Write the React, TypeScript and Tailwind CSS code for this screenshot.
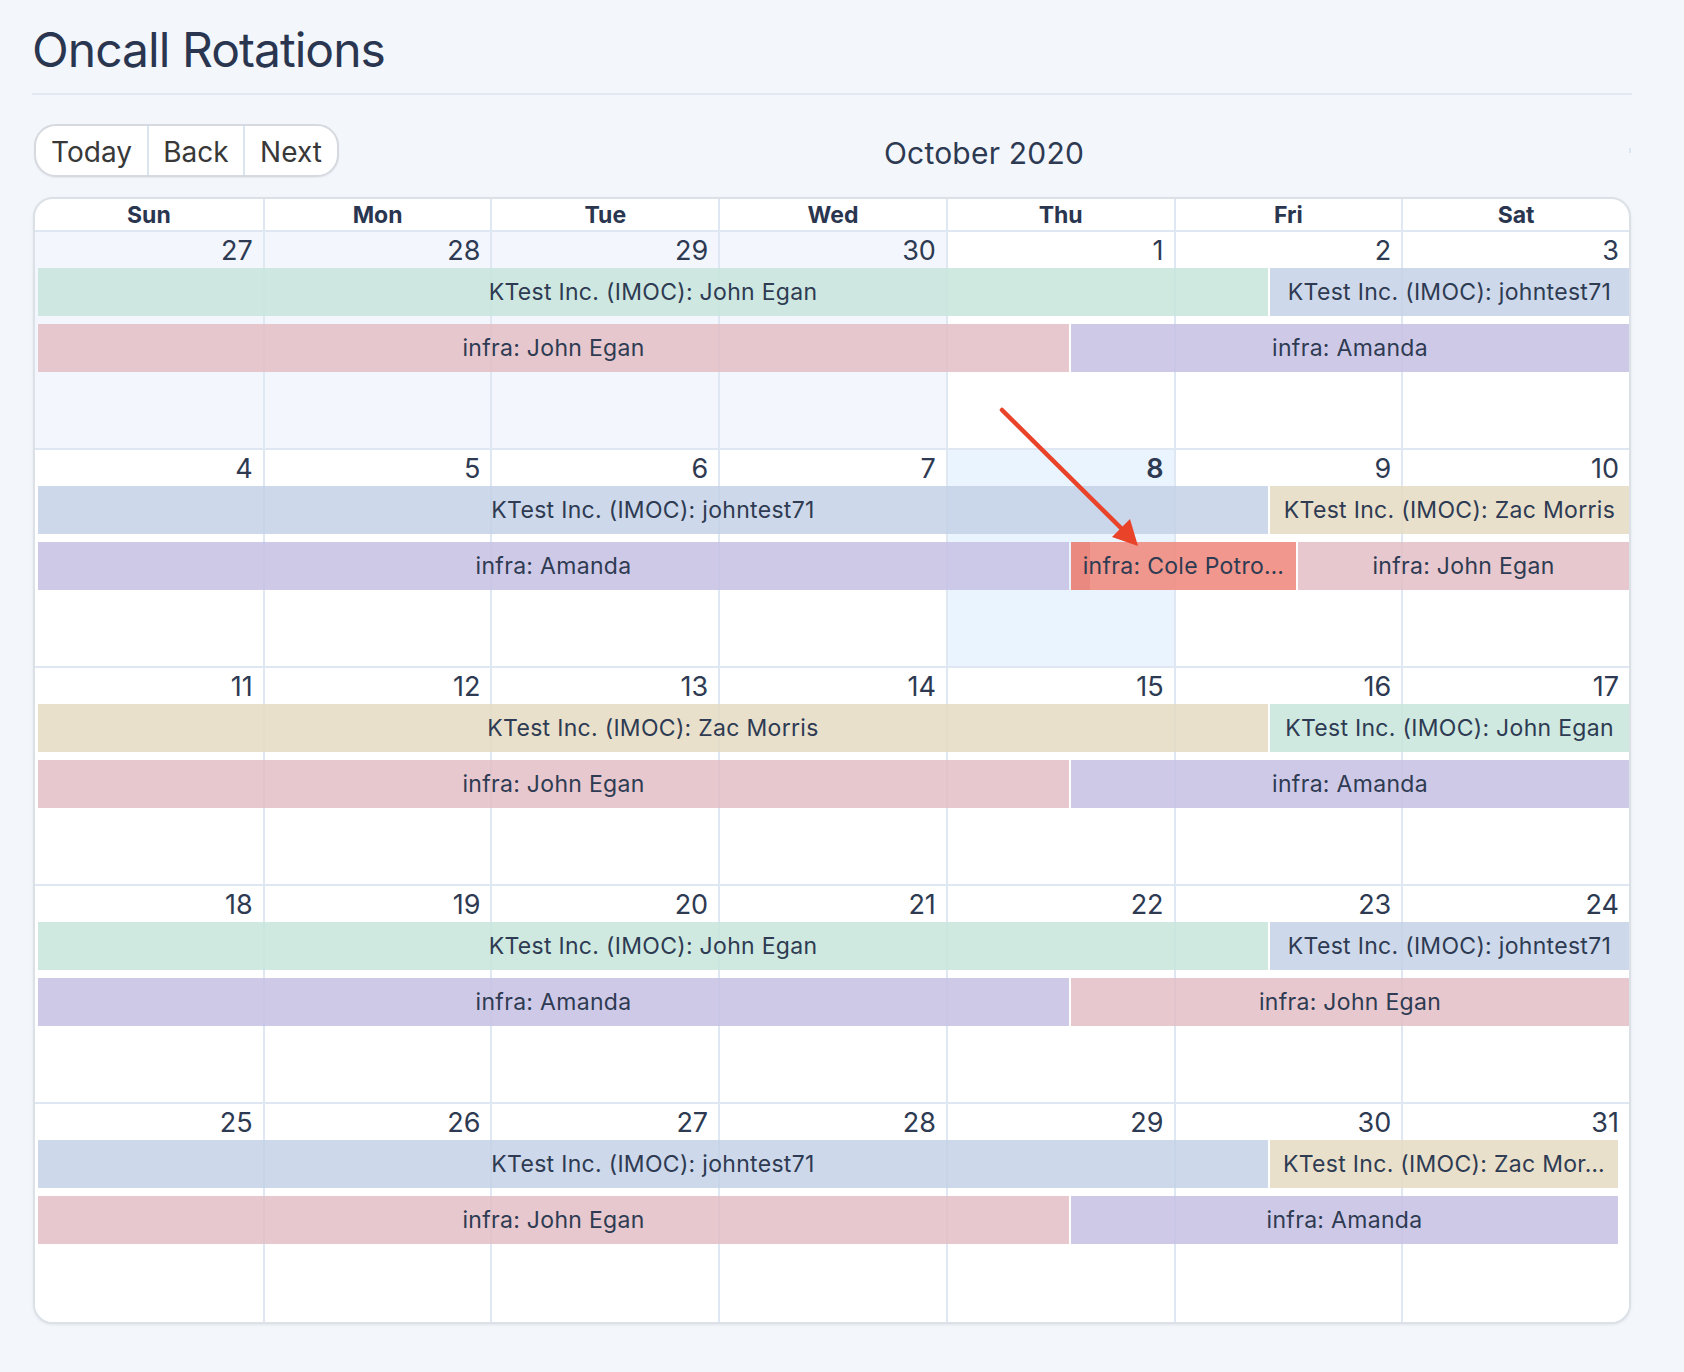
import React from 'react';

type Ev = { label: string; color: string; width?: number; strip?: boolean };
type Week = { days: number[]; off?: number[]; today?: number; lanes: Ev[][]; short?: boolean };

const GREEN = 'bg-[#c7e5dc]/85';
const PINK = 'bg-[#e3bec5]/85';
const BLUE = 'bg-[#c4d1e6]/85';
const PURPLE = 'bg-[#c7c0e4]/85';
const TAN = 'bg-[#e5dbc3]/85';
const SALMON = 'bg-[#ef8c81]/90';

const weeks: Week[] = [
    {
        days: [27, 28, 29, 30, 1, 2, 3],
        off: [0, 1, 2, 3],
        lanes: [
            [{ label: 'KTest Inc. (IMOC): John Egan', color: GREEN, width: 1230 }, { label: 'KTest Inc. (IMOC): johntest71', color: BLUE }],
            [{ label: 'infra: John Egan', color: PINK, width: 1031 }, { label: 'infra: Amanda', color: PURPLE }],
        ],
    },
    {
        days: [4, 5, 6, 7, 8, 9, 10],
        today: 4,
        lanes: [
            [{ label: 'KTest Inc. (IMOC): johntest71', color: BLUE, width: 1230 }, { label: 'KTest Inc. (IMOC): Zac Morris', color: TAN }],
            [
                { label: 'infra: Amanda', color: PURPLE, width: 1031 },
                { label: 'infra: Cole Potro…', color: SALMON, width: 225, strip: true },
                { label: 'infra: John Egan', color: PINK },
            ],
        ],
    },
    {
        days: [11, 12, 13, 14, 15, 16, 17],
        lanes: [
            [{ label: 'KTest Inc. (IMOC): Zac Morris', color: TAN, width: 1230 }, { label: 'KTest Inc. (IMOC): John Egan', color: GREEN }],
            [{ label: 'infra: John Egan', color: PINK, width: 1031 }, { label: 'infra: Amanda', color: PURPLE }],
        ],
    },
    {
        days: [18, 19, 20, 21, 22, 23, 24],
        lanes: [
            [{ label: 'KTest Inc. (IMOC): John Egan', color: GREEN, width: 1230 }, { label: 'KTest Inc. (IMOC): johntest71', color: BLUE }],
            [{ label: 'infra: Amanda', color: PURPLE, width: 1031 }, { label: 'infra: John Egan', color: PINK }],
        ],
    },
    {
        days: [25, 26, 27, 28, 29, 30, 31],
        short: true,
        lanes: [
            [{ label: 'KTest Inc. (IMOC): johntest71', color: BLUE, width: 1230 }, { label: 'KTest Inc. (IMOC): Zac Mor…', color: TAN }],
            [{ label: 'infra: John Egan', color: PINK, width: 1031 }, { label: 'infra: Amanda', color: PURPLE }],
        ],
    },
];

const dayNames = ['Sun', 'Mon', 'Tue', 'Wed', 'Thu', 'Fri', 'Sat'];

const EventBar: React.FC<{ ev: Ev }> = ({ ev }) => (
    <div
        className={`relative h-[48px] min-w-0 ${ev.color} ${ev.width ? 'shrink-0' : 'flex-1'}`}
        style={ev.width ? { width: ev.width } : undefined}
    >
        {ev.strip && <div className="absolute left-0 top-0 h-full w-[19px] bg-[#e07268]/35" />}
        <div className="relative truncate px-[10px] pt-[1px] text-center text-[23px] leading-[47px] tracking-[0.3px] text-[#2e3b52]">{ev.label}</div>
    </div>
);

const WeekRow: React.FC<{ week: Week; last: boolean }> = ({ week, last }) => (
    <div className={`relative h-[218px] ${last ? '' : 'border-b-2 border-[#dfe7f2]'}`}>
        <div className="grid h-full grid-cols-7">
            {week.days.map((d, i) => {
                const off = week.off?.includes(i);
                const today = week.today === i;
                return (
                    <div
                        key={i}
                        className={`pr-[10px] pt-[5px] text-right text-[27px] leading-[27px] text-[#2d3a52] ${i > 0 ? 'border-l-2 border-[#dfe7f2]' : ''} ${off ? 'bg-[#f3f6fc]' : today ? 'bg-[#eaf4ff]' : 'bg-white'} ${today ? 'font-semibold' : ''}`}
                    >
                        {d}
                    </div>
                );
            })}
        </div>
        <div className="absolute inset-x-0 top-[36px] flex flex-col gap-[8px]">
            {week.lanes.map((lane, li) => (
                <div key={li} className={`flex gap-[2px] pl-[3px] ${week.short ? 'pr-[11px]' : ''}`}>
                    {lane.map((ev, ei) => (
                        <EventBar key={ei} ev={ev} />
                    ))}
                </div>
            ))}
        </div>
    </div>
);

export default function App() {
    return (
        <div className="relative min-h-screen bg-[#f3f6fb] font-['Inter',sans-serif]">
            <div className="w-[1600px] pl-[32px] pt-[26px] box-content">
                <h1 className="text-[48px] font-normal leading-[48px] tracking-[-0.02em] text-[#2a3650]">Oncall Rotations</h1>
                <div className="mt-[19px] h-[2px] bg-[#e1e8f2]" />

                <div className="mt-[29px] flex h-[53px] items-center">
                    <div className="ml-[2px] flex h-[53px] overflow-hidden rounded-[22px] border-2 border-[#d6dae0] bg-white text-[28px] text-[#383838] shadow-[0_1px_2px_rgba(0,0,0,0.06)]">
                        <button className="w-[111px] pt-[3px] leading-[46px]">Today</button>
                        <button className="w-[96px] border-l-2 border-[#dce6f1] pt-[3px] leading-[46px]">Back</button>
                        <button className="w-[94px] border-l-2 border-[#dce6f1] pt-[3px] leading-[46px]">Next</button>
                    </div>
                    <div className="mt-[4px] flex-1 text-center text-[30px] leading-[30px] tracking-[0.2px] text-[#2d3a52]">October 2020</div>
                    <div className="mr-[1px] h-[5px] w-[2px] bg-[#dbe6f2]" />
                </div>

                <div className="ml-[1px] mt-[20px] w-[1598px] overflow-hidden rounded-[20px] border-2 border-[#dce1e8] bg-white shadow-[0_1px_3px_rgba(0,0,0,0.08)]">
                    <div className="grid h-[33px] grid-cols-7 border-b-2 border-[#dfe7f2]">
                        {dayNames.map((n, i) => (
                            <div
                                key={n}
                                className={`pt-[1px] text-center text-[23px] font-bold leading-[31px] text-[#2a3650] ${i > 0 ? 'border-l-2 border-[#dfe7f2]' : ''}`}
                            >
                                {n}
                            </div>
                        ))}
                    </div>
                    {weeks.map((w, i) => (
                        <WeekRow key={i} week={w} last={i === weeks.length - 1} />
                    ))}
                </div>
            </div>

            <svg className="pointer-events-none absolute left-0 top-0" width="1684" height="1372">
                <line x1="1002" y1="410" x2="1124" y2="531" stroke="#e9432a" strokeWidth="4.5" strokeLinecap="round" />
                <polygon points="1138,546 1112,537 1130,519" fill="#e9432a" />
            </svg>
        </div>
    );
}
